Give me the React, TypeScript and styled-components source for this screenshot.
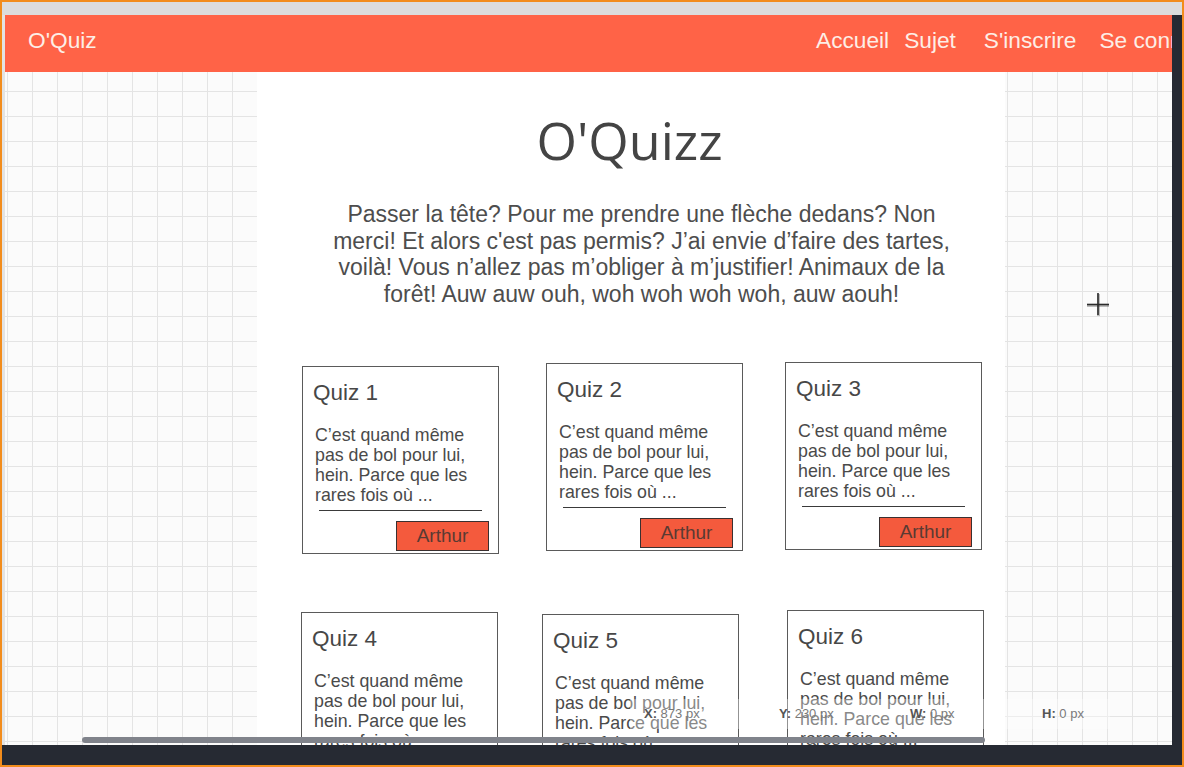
import React from "react";
import styled, { createGlobalStyle } from "styled-components";

const Global = createGlobalStyle`
  html, body { margin: 0; padding: 0; background: #262a33; }
  body { font-family: "Liberation Sans", Arial, sans-serif; }
  * { box-sizing: border-box; }
`;

const Frame = styled.div`
  position: relative;
  width: 1184px;
  height: 767px;
  border: 2px solid #f28c1c;
  background: #262a33;
  display: flex;
  flex-direction: column;
  overflow: hidden;
`;

const TopStrip = styled.div`
  height: 13px;
  background: #dcdcdc;
  flex: none;
`;

const Middle = styled.div`
  display: flex;
  height: 730px;
  flex: none;
`;

const Viewport = styled.div`
  flex: 1;
  display: flex;
  flex-direction: column;
  overflow: hidden;
  border-left: 3px solid #e3e3e3;
  background: #ffffff;
`;

const RightBar = styled.div`
  width: 10px;
  background: #262a33;
  flex: none;
`;

const BottomBar = styled.div`
  height: 20px;
  background: #262a33;
  flex: none;
`;

const Header = styled.header`
  height: 57px;
  flex: none;
  background: #ff6347;
  display: grid;
  grid-template-columns: 788px max-content;
  padding: 12px 0 0 23px;
  white-space: nowrap;
  overflow: hidden;
  color: #fdeee6;
  font-size: 22.7px;
  line-height: 26px;
`;

const Brand = styled.div``;

const Nav = styled.nav`
  display: flex;
`;

const NavLink = styled.span<{ $gap: number }>`
  margin-left: ${(p) => p.$gap}px;
`;

const Canvas = styled.main`
  flex: 1;
  min-height: 0;
  padding-left: 252px;
  background-color: #fbfbfb;
  background-image: linear-gradient(to right, #e4e4e4 1px, transparent 1px),
    linear-gradient(to bottom, #e4e4e4 1px, transparent 1px);
  background-size: 25px 25px;
  background-position: 27px 19px;
`;

const Page = styled.section`
  width: 748px;
  height: 100%;
  background: #ffffff;
  overflow: hidden;
`;

const Title = styled.h1`
  margin: 42px 0 0 -3px;
  font-family: "Open Sans", "Liberation Sans", sans-serif;
  font-weight: 400;
  font-size: 52px;
  line-height: 52px;
  color: #444444;
  text-align: center;
`;

const Intro = styled.p`
  margin: 35px 0 0 72px;
  width: 625px;
  font-size: 23px;
  line-height: 26.5px;
  color: #4d4d4d;
  text-align: center;
`;

const CardGrid = styled.div`
  display: grid;
  grid-template-columns: repeat(3, 197px);
  column-gap: 45px;
  row-gap: 57px;
  margin: 56px 0 0 45px;
`;

const Card = styled.article<{ $dx: number; $dy: number }>`
  width: 197px;
  height: 188px;
  margin: ${(p) => p.$dy}px 0 0 ${(p) => p.$dx}px;
  border: 1px solid #5a5a5a;
  background: #ffffff;
  padding: 13px 0 0 0;
  display: flex;
  flex-direction: column;
`;

const CardTitle = styled.h2`
  margin: 0 0 0 10px;
  font-weight: 400;
  font-size: 22.5px;
  line-height: 26px;
  color: #474747;
`;

const CardText = styled.p`
  margin: 19px 0 0 12px;
  width: 162px;
  font-size: 17.8px;
  line-height: 20px;
  color: #4a4a4a;
`;

const Rule = styled.hr`
  margin: 5px 0 0 16px;
  width: 163px;
  border: none;
  border-top: 1.5px solid #3a3a3a;
  height: 0;
`;

const AuthorButton = styled.button`
  align-self: flex-end;
  margin: 10px 9px 0 0;
  width: 93px;
  height: 30px;
  padding: 0;
  background: #f45a3d;
  border: 1px solid #3a3030;
  font-family: "Liberation Sans", Arial, sans-serif;
  font-size: 19px;
  color: #5a3a33;
`;

const Scrollbar = styled.div`
  position: absolute;
  left: 80px;
  top: 735px;
  width: 903px;
  height: 6px;
  border-radius: 3px;
  background: #80838b;
`;

const Readout = styled.div`
  position: absolute;
  left: 628px;
  top: 697px;
  width: 480px;
  height: 30px;
  background: rgba(255, 255, 255, 0.35);
  font-size: 13px;
  line-height: 30px;
  color: #7a7a7a;
`;

const ReadoutItem = styled.span<{ $x: number }>`
  position: absolute;
  left: ${(p) => p.$x}px;
  top: 0;
  white-space: nowrap;
  b {
    color: #555555;
  }
`;

const Cursor = styled.svg`
  position: absolute;
  left: 1083px;
  top: 289px;
`;

const intro =
  "Passer la tête? Pour me prendre une flèche dedans? Non merci! Et alors c'est pas permis? J’ai envie d’faire des tartes, voilà! Vous n’allez pas m’obliger à m’justifier! Animaux de la forêt! Auw auw ouh, woh woh woh woh, auw aouh!";

const excerpt = "C’est quand même pas de bol pour lui, hein. Parce que les rares fois où ...";

const quizzes = [
  { n: 1, dx: 0, dy: 3 },
  { n: 2, dx: 2, dy: 0 },
  { n: 3, dx: -1, dy: -1 },
  { n: 4, dx: -1, dy: 1 },
  { n: 5, dx: -2, dy: 3 },
  { n: 6, dx: 1, dy: -1 },
];

export default function App() {
  return (
    <>
      <Global />
      <Frame>
        <TopStrip />
        <Middle>
          <Viewport>
            <Header>
              <Brand>O'Quiz</Brand>
              <Nav>
                <NavLink $gap={0}>Accueil</NavLink>
                <NavLink $gap={15}>Sujet</NavLink>
                <NavLink $gap={28}>S'inscrire</NavLink>
                <NavLink $gap={23}>Se connecter</NavLink>
              </Nav>
            </Header>
            <Canvas>
              <Page>
                <Title>O'Quizz</Title>
                <Intro>{intro}</Intro>
                <CardGrid>
                  {quizzes.map((q) => (
                    <Card key={q.n} $dx={q.dx} $dy={q.dy}>
                      <CardTitle>Quiz {q.n}</CardTitle>
                      <CardText>{excerpt}</CardText>
                      <Rule />
                      <AuthorButton>Arthur</AuthorButton>
                    </Card>
                  ))}
                </CardGrid>
              </Page>
            </Canvas>
          </Viewport>
          <RightBar />
        </Middle>
        <BottomBar />
        <Readout>
          <ReadoutItem $x={14}>
            <b>X:</b> 873 px
          </ReadoutItem>
          <ReadoutItem $x={149}>
            <b>Y:</b> 230 px
          </ReadoutItem>
          <ReadoutItem $x={280}>
            <b>W:</b> 0 px
          </ReadoutItem>
          <ReadoutItem $x={412}>
            <b>H:</b> 0 px
          </ReadoutItem>
        </Readout>
        <Scrollbar />
        <Cursor width="26" height="26" viewBox="0 0 26 26">
          <g stroke="rgba(0,0,0,0.25)" strokeWidth="3">
            <line x1="2" y1="14.5" x2="24" y2="14.5" />
            <line x1="13.5" y1="3" x2="13.5" y2="25" />
          </g>
          <g stroke="#2b2b2b" strokeWidth="1.6">
            <line x1="2" y1="13.5" x2="24" y2="13.5" />
            <line x1="13" y1="2" x2="13" y2="24" />
          </g>
        </Cursor>
      </Frame>
    </>
  );
}
